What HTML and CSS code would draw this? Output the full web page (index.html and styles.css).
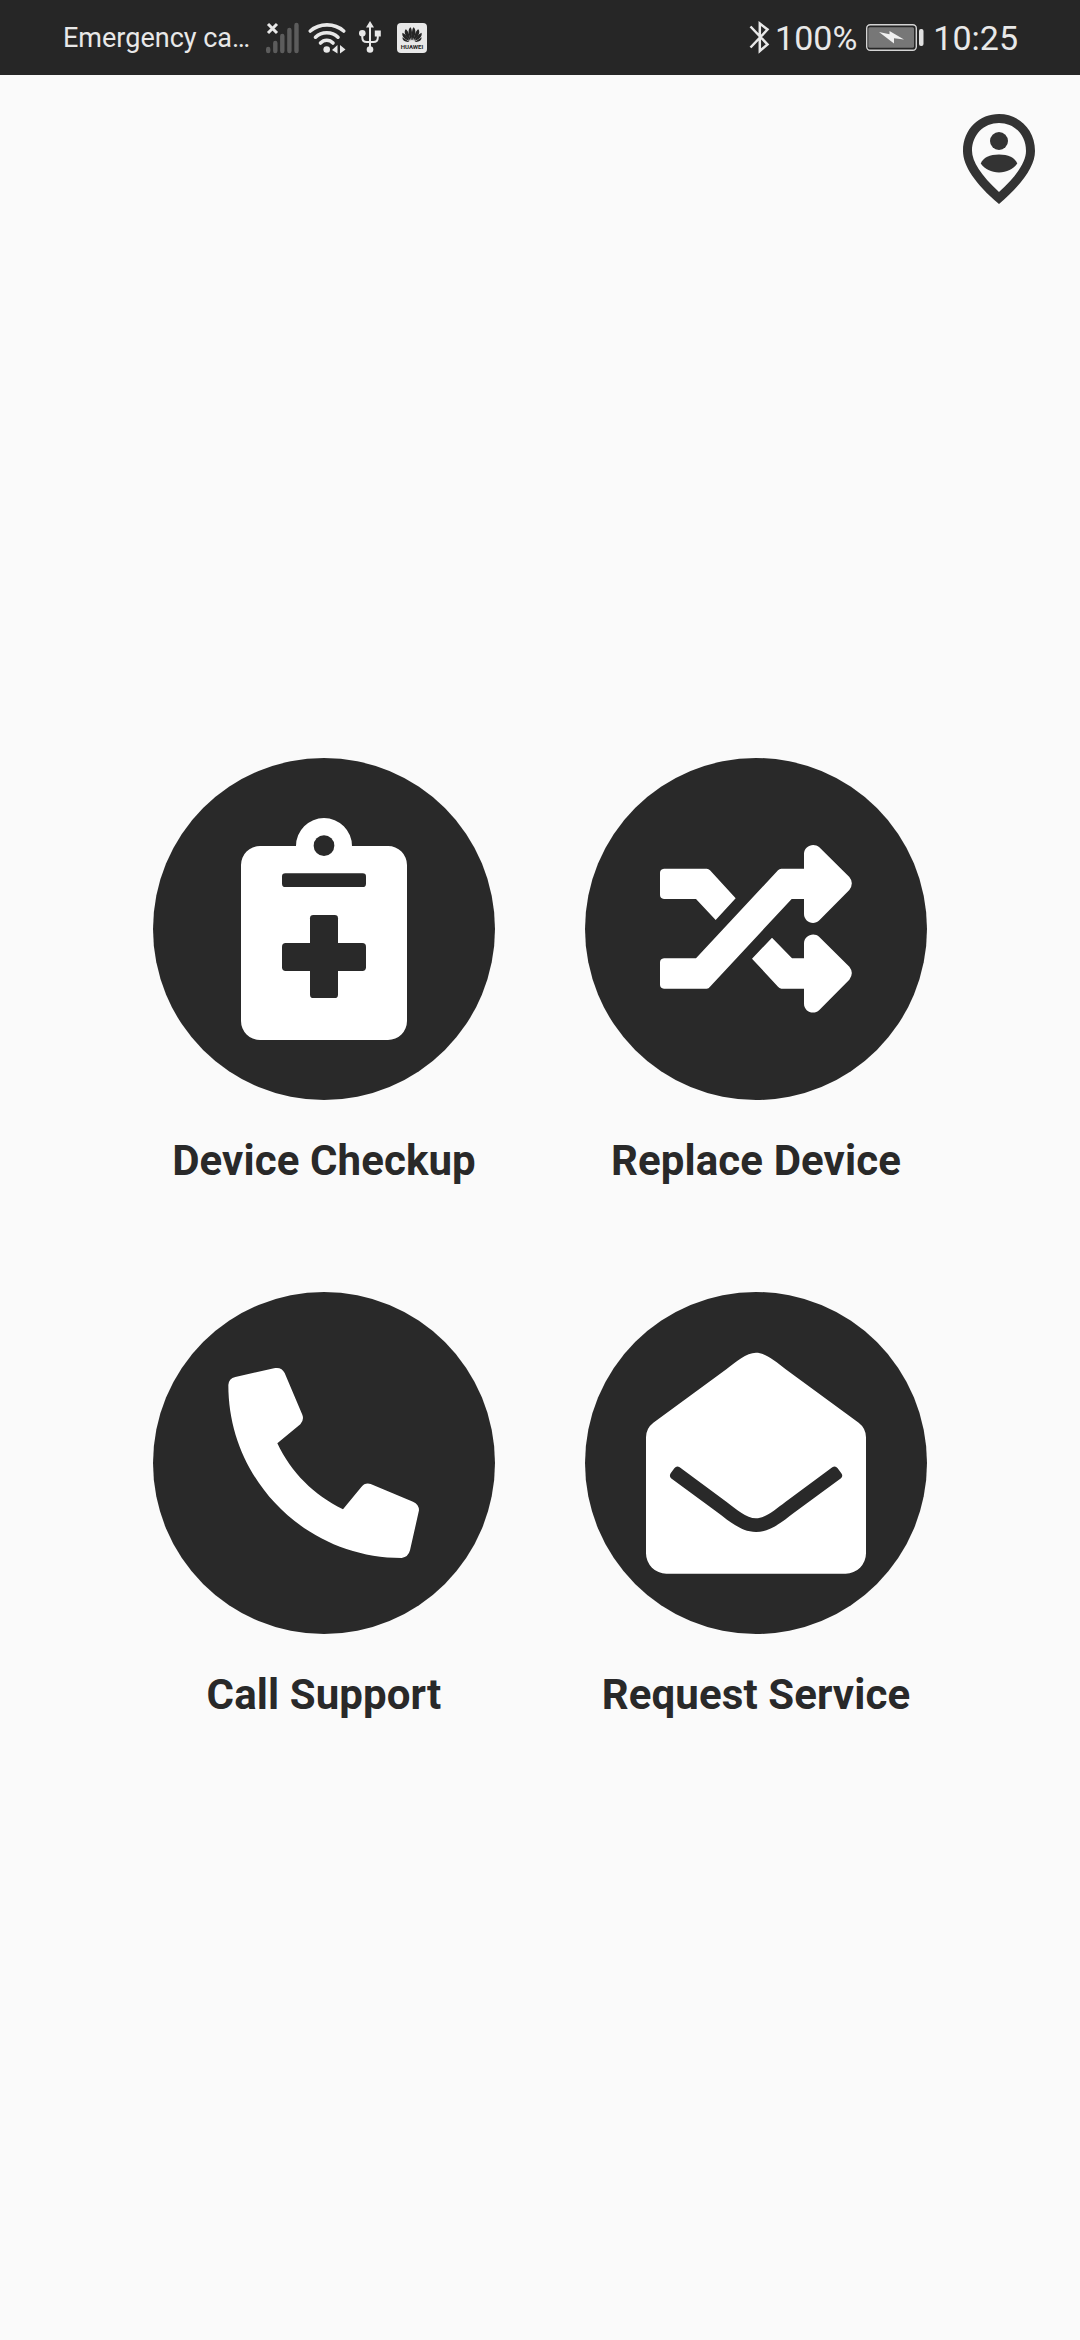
FILE: index.html
```html
<!DOCTYPE html>
<html lang="en">
<head>
    <meta charset="UTF-8">
    <meta name="viewport" content="width=device-width, initial-scale=1.0">
    <link rel="stylesheet" href="styles.css">
    <title>Device Support</title>
</head>
<body>
    <div class="status-bar">
        <div class="status-left">
            <span class="carrier">Emergency ca…</span>
            <svg class="signal" viewBox="0 0 34 32">
                <path d="M2 2l9 9M11 2l-9 9" stroke="#e8e8e8" stroke-width="3"/>
                <path d="M2.200 27v2M9.300 21v8M16.300 14v15M23.400 8v21M30.500 3v26" stroke="#5c5c5c" stroke-width="4.400" stroke-linecap="round"/>
            </svg>
            <svg class="wifi" viewBox="0 0 38 32">
                <g fill="none" stroke="#e8e8e8" stroke-width="3.600" stroke-linecap="round">
                    <path d="M2.300 9C11.500 .8 26.500 .8 35.700 9"/>
                    <path d="M7.500 15.200C13.500 9.300 24 9.300 30 15.200"/>
                    <path d="M12.500 21C16 17.300 21.500 17.300 25 21"/>
                </g>
                <circle cx="18.700" cy="27.500" r="3.300" fill="#e8e8e8"/>
                <path d="M29.500 23v8.500l-5.500-3.500zM32 23v8.500l5.500-4z" fill="#e8e8e8"/>
            </svg>
            <svg class="usb" viewBox="0 0 22 33">
                <path d="M11 5v22M3.300 12v4.500q0 4.500 4.500 4.500h6.500q4.500 0 4.500-4.500V12" fill="none" stroke="#e8e8e8" stroke-width="2"/>
                <path d="M11 0l4 6.500H7zM15.800 9.500h6v6h-6z" fill="#e8e8e8"/>
                <circle cx="3.300" cy="12.300" r="3.300" fill="#e8e8e8"/>
                <circle cx="11" cy="28.500" r="3.300" fill="#e8e8e8"/>
            </svg>
            <svg class="huawei" viewBox="0 0 30 30">
                <rect width="30" height="30" rx="4" fill="#e8e8e8"/>
                <g fill="#262626">
                    <path d="M14.600 17.500C10.800 12 10.700 6 13.600 4.300c1.600 2.500 1.800 7.500 1 13.200zM15.400 17.500C19.200 12 19.300 6 16.400 4.300c-1.600 2.500-1.800 7.500-1 13.200z"/>
                    <path d="M13.500 17.500C8 13.500 6.500 9 8.700 6.300c2.300 1.200 4 5.700 4.800 11.200zM16.500 17.500C22 13.500 23.500 9 21.300 6.300c-2.300 1.200-4 5.700-4.800 11.200z"/>
                    <path d="M12.600 18.100C7 16.500 4.500 13 5.500 9.800c2.800 1.200 5.300 4.200 7.100 8.300zM17.400 18.100C23 16.500 25.500 13 24.500 9.800c-2.800 1.200-5.300 4.200-7.100 8.300z"/>
                    <path d="M12.500 18.900C8 19.500 5.500 17.500 5.300 14.300zM17.500 18.900C22 19.500 24.500 17.500 24.700 14.300z"/>
                </g>
                <text class="huawei-name" x="3.700" y="25.800" textLength="22.600" lengthAdjust="spacingAndGlyphs">HUAWEI</text>
            </svg>
        </div>
        <div class="status-right">
            <svg class="bluetooth" viewBox="0 0 21 33">
                <path d="M1.500 5.500L18.500 23.500 10.800 30V2.500L18.500 8.500 1.500 26.500" fill="none" stroke="#e8e8e8" stroke-width="2.500"/>
            </svg>
            <span class="percent">100%</span>
            <svg class="battery" viewBox="0 0 58 27">
                <rect x=".7" y=".7" width="49.600" height="25.600" rx="3.500" fill="#262626" stroke="#d4d4d4" stroke-width="1.400"/>
                <rect x="2.300" y="3.300" width="45.700" height="20.500" rx="1.500" fill="#777"/>
                <path d="M13 8l10.500 2.200V7L38 15.500l-10-1.200v5.200z" fill="#f0f0f0"/>
                <rect x="53" y="5" width="4.500" height="17" rx="2" fill="#e0e0e0"/>
            </svg>
            <span class="clock">10:25</span>
        </div>
    </div>

    <div class="top-bar">
        <svg class="person-pin" viewBox="0 0 24 24" fill="#333">
            <path d="M12 2C7.800 2 4 5.220 4 10.200c0 3.320 2.670 7.250 8 11.800 5.330-4.550 8-8.480 8-11.800C20 5.220 16.200 2 12 2zm0 17.330c-4.050-3.700-6-6.790-6-9.140C6 6.570 8.650 4 12 4s6 2.570 6 6.200c0 2.340-1.950 5.440-6 9.130z"/>
            <circle cx="12" cy="8" r="2"/>
            <path d="M7.940 13C8.400 11.700 10 11 12 11s3.600.7 4.060 2C15.200 14.200 13.700 15 12 15s-3.200-.8-4.060-2z"/>
        </svg>
    </div>

    <div class="menu">
        <div class="item">
            <svg class="circle" viewBox="39 54 1026 1026">
                <path fill="#fff" d="M468 318a84 84 0 0 1 168 0H744a57 57 0 0 1 57 57V843a57 57 0 0 1-57 57H360a57 57 0 0 1-57-57V375a57 57 0 0 1 57-57z"/>
                <g fill="#292929">
                    <circle cx="552" cy="317" r="31"/>
                    <rect x="426" y="400" width="252" height="41" rx="10"/>
                    <rect x="426" y="609" width="252" height="84" rx="11"/>
                    <rect x="510" y="525" width="84" height="249" rx="10"/>
                </g>
            </svg>
            <div class="label">Device Checkup</div>
        </div>
        <div class="item">
            <svg class="circle" viewBox="45 54 1026 1026">
                <g fill="#fff">
                    <path d="M282 386H410Q416 386 420 391L497 475 437 540 378 477H282Q270 475 270 465V398Q270 388 282 386z"/>
                    <path d="M282 655H378L624 391Q628 386 634 386H702V341C702 318 731 306 748 322L838 411Q853 429 838 450L748 541C730 558 702 545 702 522V477H665L420 740Q416 746 410 746H282Q270 744 270 734V667Q270 657 282 655z"/>
                    <path d="M606 593L666 655H702V610C702 587 731 575 748 591L838 680Q853 699 838 719L748 810C730 827 702 814 702 791V746H634Q628 745 624 740L546 656z"/>
                </g>
            </svg>
            <div class="label">Replace Device</div>
        </div>
        <div class="item">
            <svg class="circle" viewBox="39 36 1026 1026">
                <path fill="#fff" d="M286 291L402 265C417 261 428 267 434 279L487 404Q493 420 481 433L412 490C454 578 521 645 609 688L664 621Q675 607 692 612L819 665Q837 673 837 691L810 811Q805 831 785 834C498 834 265 601 265 315Q266 296 286 291z"/>
            </svg>
            <div class="label">Call Support</div>
        </div>
        <div class="item">
            <svg class="circle" viewBox="45 36 1026 1026">
                <path fill="#fff" d="M228 472Q228 445 250 428L470 267C498 245 529 218 558 218S618 245 646 267L866 428Q888 445 888 472V820A61 61 0 0 1 827 881H289A61 61 0 0 1 228 820z"/>
                <path fill="#292929" d="M303 595Q297 588 302 580L313 565Q320 556 329 562L470 666C498 687 529 715 558 715S618 687 646 666L787 562Q796 556 803 565L814 580Q820 588 813 595L671 699C643 720 603 756 558 756S473 720 445 699z"/>
            </svg>
            <div class="label">Request Service</div>
        </div>
    </div>
</body>
</html>
```
FILE: styles.css
```css
body {
    margin: 0;
    height: 2340px;
    background-color: #fafafa;
    font-family: Roboto, sans-serif;
    overflow: hidden;
}

svg {
    display: block;
    flex: none;
}

.status-bar {
    display: flex;
    justify-content: space-between;
    height: 75px;
    padding: 0 62px 0 63px;
    background-color: #262626;
    color: #e8e8e8;
}

.status-left,
.status-right {
    display: flex;
    align-items: center;
    white-space: nowrap;
}

.carrier {
    width: 203px;
    padding-top: 2px;
    font-size: 27px;
    line-height: 75px;
}

.signal {
    width: 34px;
    height: 32px;
    margin-right: 8px;
}

.wifi {
    width: 38px;
    height: 32px;
    margin-right: 13px;
}

.usb {
    width: 22px;
    height: 33px;
    margin-right: 16px;
}

.huawei {
    width: 30px;
    height: 30px;
}

.huawei-name {
    font-size: 5.8px;
    font-weight: bold;
    fill: #262626;
}

.bluetooth {
    width: 21px;
    height: 33px;
    margin-right: 5px;
}

.percent,
.clock {
    padding-top: 2px;
    font-size: 34px;
    line-height: 75px;
}

.battery {
    width: 58px;
    height: 27px;
    margin: 0 9px;
}

.top-bar {
    display: flex;
    justify-content: flex-end;
    padding: 30px 27px 0 0;
}

.person-pin {
    width: 108px;
    height: 108px;
}

.menu {
    display: grid;
    grid-template-columns: repeat(2, 432px);
    grid-auto-rows: 534px;
    justify-content: center;
    margin-top: 545px;
}

.item {
    display: flex;
    flex-direction: column;
    align-items: center;
}

.circle {
    width: 342px;
    height: 342px;
    border-radius: 50%;
    background-color: #292929;
}

.label {
    margin-top: 36px;
    font-size: 42px;
    font-weight: bold;
    line-height: 50px;
    letter-spacing: 0.1px;
    color: #292929;
}
```
